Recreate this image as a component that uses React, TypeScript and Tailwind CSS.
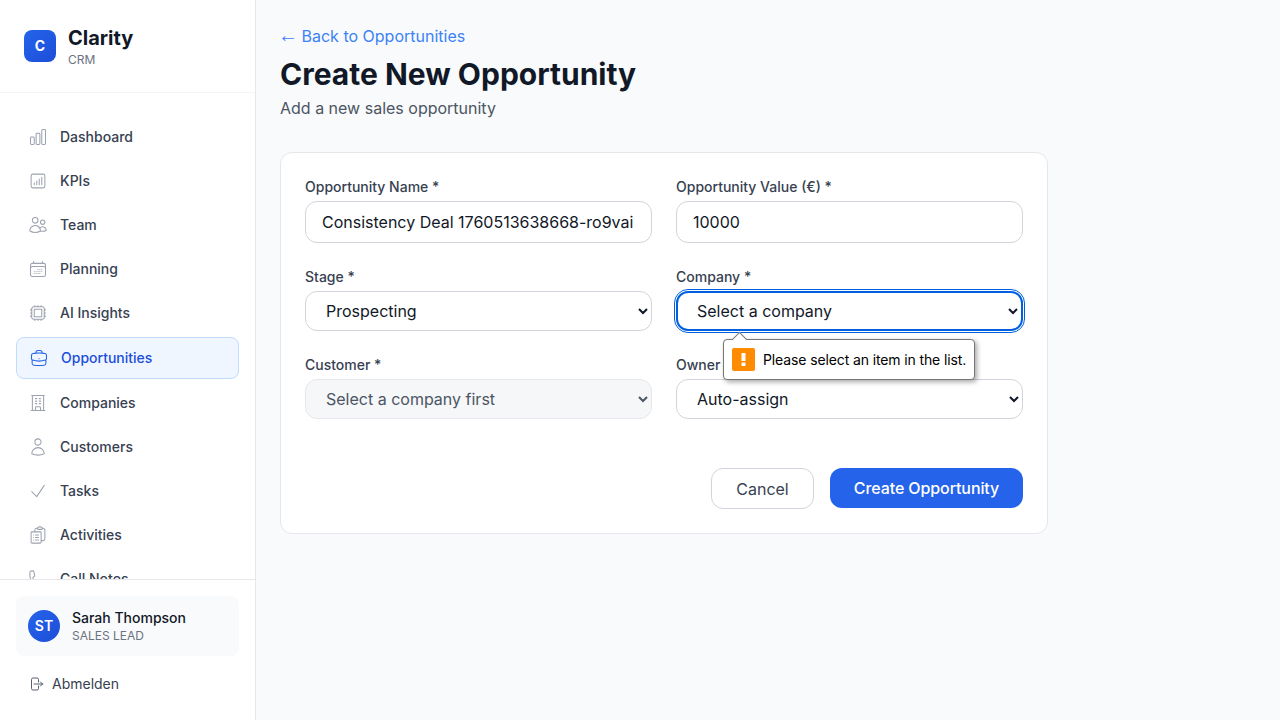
import React from "react";
import {
  HiOutlineChartBar, HiOutlineChartBarSquare, HiOutlineUsers, HiOutlineCalendarDays, HiOutlineCpuChip,
  HiOutlineBriefcase, HiOutlineBuildingOffice, HiOutlineUser, HiOutlineCheck, HiOutlineClipboardDocumentList,
  HiOutlinePhone, HiOutlineArrowRightOnRectangle,
} from "react-icons/hi2";

const nav = [
  { label: "Dashboard", icon: HiOutlineChartBar },
  { label: "KPIs", icon: HiOutlineChartBarSquare },
  { label: "Team", icon: HiOutlineUsers },
  { label: "Planning", icon: HiOutlineCalendarDays },
  { label: "AI Insights", icon: HiOutlineCpuChip },
  { label: "Opportunities", icon: HiOutlineBriefcase, active: true },
  { label: "Companies", icon: HiOutlineBuildingOffice },
  { label: "Customers", icon: HiOutlineUser },
  { label: "Tasks", icon: HiOutlineCheck },
  { label: "Activities", icon: HiOutlineClipboardDocumentList },
  { label: "Call Notes", icon: HiOutlinePhone },
];

const labelCls = "block mb-1 text-sm leading-5 font-medium text-[#374151]";
const selectCls = "w-full h-10 px-4 rounded-xl border border-[#d1d5db] bg-white text-base text-[#111827]";

export default function App() {
  return (
    <div className="flex h-[720px] overflow-hidden bg-[#f9fafb] font-['Inter',sans-serif]">
      <aside className="flex w-64 shrink-0 flex-col border-r border-[#e5e7eb] bg-white">
        <div className="flex items-center gap-3 border-b border-[#f3f4f6] p-6">
          <div className="flex h-8 w-8 items-center justify-center rounded-lg bg-gradient-to-br from-[#2563eb] to-[#1d4ed8] text-sm font-bold text-white">C</div>
          <div>
            <div className="text-xl font-bold leading-7 text-[#111827]">Clarity</div>
            <div className="text-xs leading-4 text-[#6b7280]">CRM</div>
          </div>
        </div>
        <nav className="flex min-h-0 flex-1 flex-col gap-1 overflow-hidden px-4 py-6">
          {nav.map((n) => {
            const Icon = n.icon;
            return (
              <div
                key={n.label}
                className={
                  n.active
                    ? "flex shrink-0 items-center gap-3 rounded-lg border border-[#bfdbfe] bg-[#eff6ff] px-3 py-2.5 text-sm font-medium leading-5 text-[#1d4ed8]"
                    : "flex shrink-0 items-center gap-3 rounded-lg px-3 py-2.5 text-sm font-medium leading-5 text-[#374151]"
                }
              >
                <Icon size={20} strokeWidth={1.25} className={n.active ? "shrink-0 text-[#2563eb]" : "shrink-0 text-[#9ca3af]"} />
                <span>{n.label}</span>
              </div>
            );
          })}
        </nav>
        <div className="border-t border-[#e5e7eb] p-4">
          <div className="flex h-[60px] items-center gap-3 rounded-lg bg-[#f9fafb] px-3">
            <div className="flex h-8 w-8 items-center justify-center rounded-full bg-gradient-to-br from-[#2563eb] to-[#1d4ed8] text-sm font-semibold text-white">ST</div>
            <div>
              <div className="text-sm font-medium leading-5 text-[#111827]">Sarah Thompson</div>
              <div className="text-xs leading-4 text-[#6b7280]">SALES LEAD</div>
            </div>
          </div>
          <div className="mt-2 flex h-10 items-center gap-2 px-3 text-sm text-[#374151]">
            <HiOutlineArrowRightOnRectangle size={16} strokeWidth={1.4} className="text-[#4b5563]" />
            <span>Abmelden</span>
          </div>
        </div>
      </aside>
      <main className="min-w-0 flex-1 px-6 pt-6">
        <div className="flex h-6 items-center text-base leading-6 text-[#3b82f6]">
          <span className="-ml-[2px] -mt-[3px] mr-[3.5px] w-[20px] text-[20px] font-['Liberation_Sans',sans-serif]">←</span>
          <span>Back to Opportunities</span>
        </div>
        <h1 className="mt-2 text-3xl font-bold leading-9 text-[#111827]">Create New Opportunity</h1>
        <p className="mt-1 text-base leading-6 text-[#4b5563]">Add a new sales opportunity</p>
        <div className="mt-8 w-[768px] rounded-xl border border-[#e5e7eb] bg-white p-6">
          <div className="grid grid-cols-2 gap-6">
            <div>
              <label className={labelCls}>Opportunity Name *</label>
              <input readOnly value="Consistency Deal 1760513638668-ro9vai" className="h-[42px] w-full rounded-xl border border-[#d1d5db] bg-white px-4 text-base text-[#111827]" />
            </div>
            <div>
              <label className={labelCls}>Opportunity Value (€) *</label>
              <input readOnly value="10000" className="h-[42px] w-full rounded-xl border border-[#d1d5db] bg-white px-4 text-base text-[#111827]" />
            </div>
            <div>
              <label className={labelCls}>Stage *</label>
              <select className={selectCls}><option>Prospecting</option></select>
            </div>
            <div className="relative">
              <label className={labelCls}>Company *</label>
              <select className="h-10 w-full rounded-xl border-2 border-[#0060df] bg-white px-[15px] text-base text-[#111827] outline outline-1 outline-offset-1 outline-[#0060df]"><option>Select a company</option></select>
              <div className="absolute left-[47px] top-[72px] z-10 flex h-[41px] w-[252px] items-center gap-2 rounded-[4px] border border-[#767676] bg-white pl-2 text-sm tracking-[-0.12px] text-black shadow-[2px_2px_5px_rgba(0,0,0,0.35)]">
                <span className="absolute -top-[6px] left-[10px] h-[11px] w-[11px] rotate-45 border-l border-t border-[#767676] bg-white" />
                <svg width="23" height="23" viewBox="0 0 23 23" className="shrink-0">
                  <rect width="23" height="23" rx="2" fill="#ff8c00" />
                  <rect x="9.5" y="5" width="4" height="8" rx="0.5" fill="#fff" />
                  <rect x="9.5" y="14.5" width="4" height="3.5" rx="0.5" fill="#fff" />
                </svg>
                <span>Please select an item in the list.</span>
              </div>
            </div>
            <div>
              <label className={labelCls}>Customer *</label>
              <select disabled className="h-10 w-full rounded-xl border border-[#e5e7eb] bg-[#f6f7f9] px-4 text-base text-[#4b5563] opacity-100"><option>Select a company first</option></select>
            </div>
            <div>
              <label className={labelCls}>Owner</label>
              <select className={selectCls}><option>Auto-assign</option></select>
            </div>
          </div>
          <div className="mt-[49px] flex justify-end gap-4">
            <button className="h-[41px] w-[103px] rounded-xl border border-[#d1d5db] bg-white text-base text-[#374151]">Cancel</button>
            <button className="h-10 w-[193px] rounded-xl bg-[#2563eb] text-base font-medium tracking-[-0.1px] text-white">Create Opportunity</button>
          </div>
        </div>
      </main>
    </div>
  );
}
